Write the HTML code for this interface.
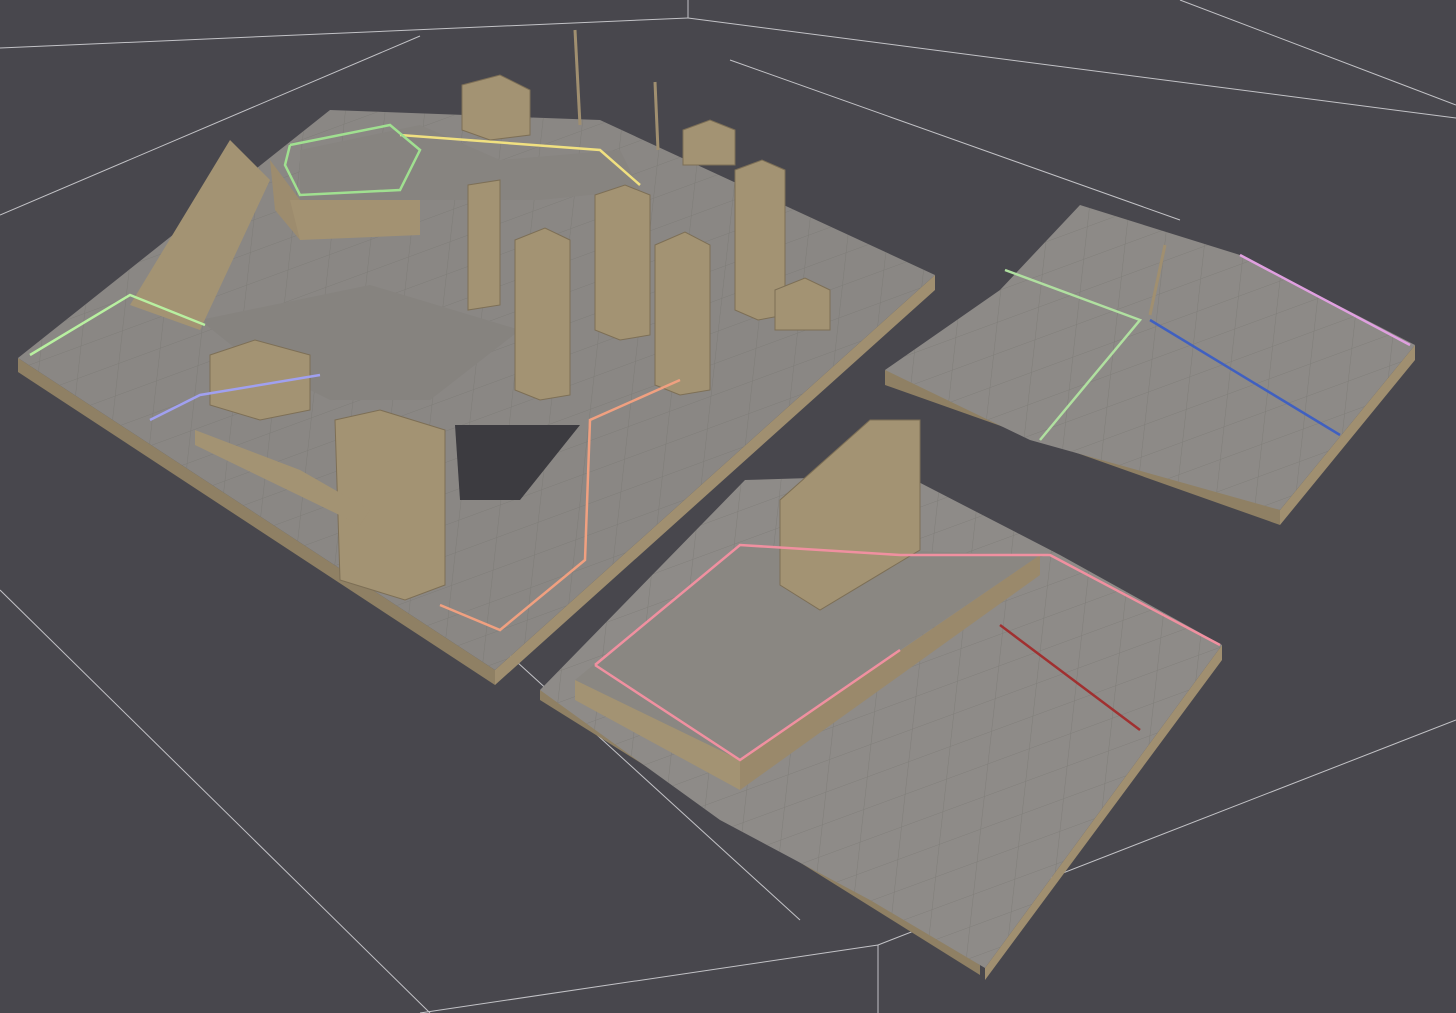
<!DOCTYPE html>
<html><head><meta charset="utf-8"><style>
html,body{margin:0;padding:0;background:#48474d;width:1456px;height:1013px;overflow:hidden}
svg{display:block}
</style></head><body>
<svg width="1456" height="1013" viewBox="0 0 1456 1013" xmlns="http://www.w3.org/2000/svg">
<defs>
<pattern id="g" width="36" height="36" patternUnits="userSpaceOnUse" patternTransform="skewX(-30) rotate(-25)">
<path d="M0 0H36M0 0V36" stroke="#77746f" stroke-width="1" fill="none" opacity="0.6"/>
</pattern>
</defs>
<rect width="1456" height="1013" fill="#48474d"/>
<g stroke="#d8d8dc" stroke-width="1" fill="none" opacity="0.85">
<line x1="0" y1="48" x2="688" y2="18"/>
<line x1="688" y1="18" x2="1456" y2="118"/>
<line x1="688" y1="18" x2="688" y2="0"/>
<line x1="0" y1="215" x2="420" y2="36"/>
<line x1="0" y1="590" x2="430" y2="1013"/>
<line x1="878" y1="945" x2="1456" y2="720"/>
<line x1="878" y1="945" x2="878" y2="1013"/>
<line x1="878" y1="945" x2="420" y2="1013"/>
<line x1="730" y1="60" x2="1180" y2="220"/>
<line x1="1180" y1="0" x2="1456" y2="105"/>
<line x1="120" y1="300" x2="800" y2="920"/>
</g>
<!-- slab 1 -->
<polygon points="18,358 495,670 495,685 18,372" fill="#8f8064"/>
<polygon points="495,670 935,275 935,290 495,685" fill="#a08f70"/>
<polygon points="18,358 330,110 600,120 935,275 495,670" fill="#8a8784"/>
<polygon points="18,358 330,110 600,120 935,275 495,670" fill="url(#g)"/>
<polygon points="200,320 370,285 520,330 430,400 330,400 250,360" fill="#86837f"/>
<polygon points="300,150 420,125 500,160 620,150 640,190 540,200 420,200 300,200" fill="#878480"/>
<polygon points="270,160 300,200 300,240 275,210" fill="#9d8c6e"/>
<polygon points="290,200 420,200 420,235 300,240" fill="#a39272"/>
<polygon points="130,305 230,140 270,180 200,330" fill="#a39373"/>
<g fill="#a39373" stroke="#7d6f56" stroke-width="1">
<polygon points="468,185 500,180 500,305 468,310"/>
<polygon points="515,240 545,228 570,240 570,395 540,400 515,390"/>
<polygon points="595,195 625,185 650,195 650,335 620,340 595,330"/>
<polygon points="655,245 685,232 710,245 710,390 680,395 655,385"/>
<polygon points="735,170 762,160 785,170 785,315 758,320 735,310"/>
<polygon points="683,130 710,120 735,130 735,165 683,165"/>
<polygon points="775,290 805,278 830,290 830,330 775,330"/>
<polygon points="210,355 255,340 310,355 310,410 260,420 210,405"/>
<polygon points="335,420 380,410 445,430 445,585 405,600 340,580"/>
<polygon points="462,85 500,75 530,90 530,135 490,140 462,130"/>
</g>
<polygon points="455,425 580,425 520,500 460,500" fill="#3c3b40"/>
<polygon points="195,430 300,470 370,510 360,525 195,445" fill="#a39373"/>
<!-- slab 2 -->
<polygon points="885,370 1280,510 1280,525 885,385" fill="#8f8064"/>
<polygon points="1280,510 1415,345 1415,360 1280,525" fill="#a08f70"/>
<polygon points="885,370 1000,290 1080,205 1240,255 1415,345 1280,510 1030,440" fill="#8d8a87"/>
<polygon points="885,370 1000,290 1080,205 1240,255 1415,345 1280,510 1030,440" fill="url(#g)"/>
<!-- slab 3 -->
<polygon points="540,690 720,790 980,965 980,975 540,700" fill="#8f8064"/>
<polygon points="985,968 1222,645 1222,660 985,980" fill="#a08f70"/>
<polygon points="540,690 745,480 905,475 1060,555 1222,645 985,968 870,900 720,820" fill="#8e8b88"/>
<polygon points="540,690 745,480 905,475 1060,555 1222,645 985,968 870,900 720,820" fill="url(#g)"/>
<polygon points="575,680 740,545 880,550 1040,555 900,650 740,760 600,700" fill="#8a8782"/>
<polygon points="575,680 740,760 740,790 575,700" fill="#a39373"/>
<polygon points="740,760 1040,555 1040,575 740,790" fill="#9a896b"/>
<polygon points="780,500 870,420 920,420 920,550 820,610 780,585" fill="#a39373" stroke="#7d6f56"/>
<g fill="none" stroke-width="2.5">
<polyline stroke="#b8f0a0" points="30,355 130,295 205,325"/>
<polyline stroke="#f0a080" points="440,605 500,630 585,560 590,420 680,380"/>
<polyline stroke="#f0e080" points="400,135 600,150 640,185"/>
<polyline stroke="#a0e090" points="290,145 390,125 420,150 400,190 300,195 285,165 290,145"/>
<polyline stroke="#a0a0f0" points="150,420 200,395 320,375"/>
<polyline stroke="#f090a0" points="595,665 740,545 900,555 1050,555 1220,645"/>
<polyline stroke="#f090a0" points="595,665 740,760 900,650"/>
<polyline stroke="#b0e0a0" points="1005,270 1140,320 1040,440"/>
<polyline stroke="#4060c0" points="1150,320 1340,435"/>
<polyline stroke="#e0a0e0" points="1240,255 1410,345"/>
<polyline stroke="#a03030" points="1000,625 1140,730"/>
</g>
<line x1="575" y1="30" x2="580" y2="125" stroke="#a08f70" stroke-width="3"/>
<line x1="655" y1="82" x2="658" y2="150" stroke="#a08f70" stroke-width="3"/>
<line x1="1165" y1="245" x2="1150" y2="315" stroke="#a08f70" stroke-width="3"/>
</svg>
</body></html>
